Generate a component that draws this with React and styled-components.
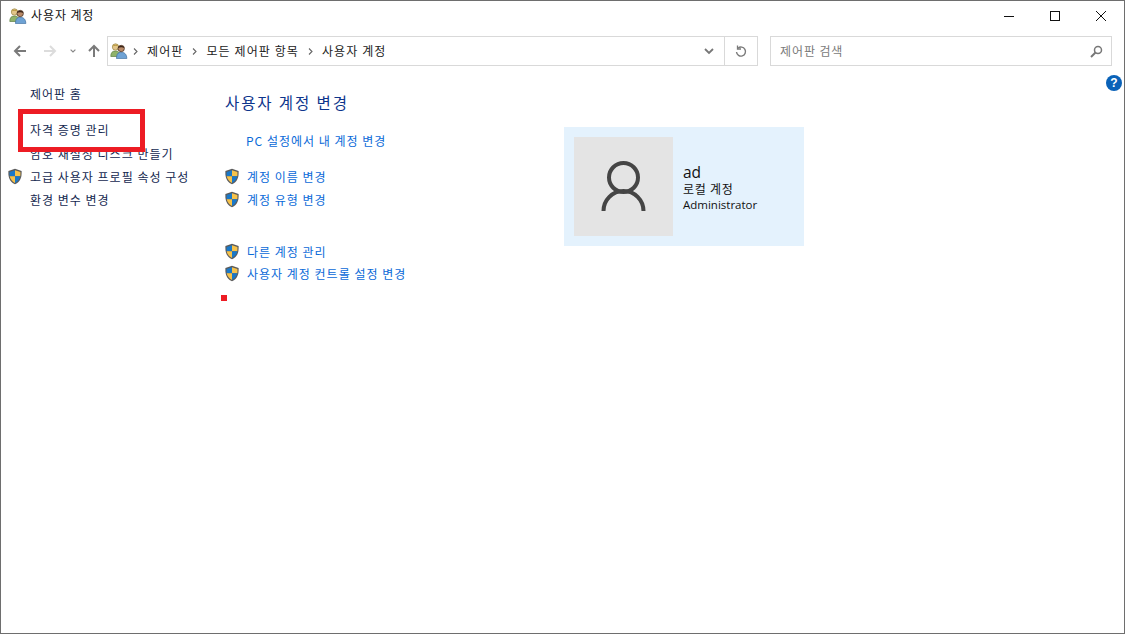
import React from "react";
import styled, { createGlobalStyle } from "styled-components";

const Global = createGlobalStyle`
  html, body { margin: 0; padding: 0; background: #fff; }
  body { font-family: "Noto Sans CJK KR", "Noto Sans", sans-serif; font-size: 12px; }
`;

const Win = styled.div`
  position: relative;
  box-sizing: border-box;
  width: 1125px;
  height: 634px;
  border: 1px solid #6e6e6e;
  overflow: hidden;
  background: #fff;
`;
const TitleBar = styled.div`
  display: flex;
  align-items: center;
  height: 29px;
  padding-left: 8px;
`;
const TitleText = styled.div`
  flex: 1;
  margin: -2px 0 0 4px;
  font-size: 12px;
  letter-spacing: 0.9px;
  color: #111;
  line-height: 29px;
`;
const WinBtn = styled.div`
  width: 46px;
  height: 29px;
  display: flex;
  align-items: center;
  justify-content: center;
`;
const NavBar = styled.div`
  display: flex;
  align-items: center;
  height: 30px;
  margin-top: 6px;
  padding-left: 4px;
`;
const NavBtn = styled.div`
  width: ${(p) => p.$w}px;
  height: 30px;
  display: flex;
  align-items: center;
  justify-content: center;
`;
const AddressBox = styled.div`
  box-sizing: border-box;
  display: flex;
  align-items: center;
  width: 651px;
  height: 30px;
  border: 1px solid #d9d9d9;
  padding-left: 2px;
`;
const Crumbs = styled.div`
  flex: 1;
  display: flex;
  align-items: center;
  min-width: 0;
`;
const Crumb = styled.span`
  font-size: 12px;
  letter-spacing: 1.1px;
  margin-top: -2px;
  color: #222;
  white-space: nowrap;
`;
const Sep = styled.svg`
  width: 5px;
  height: 7px;
  margin: 1px 9px 0 ${(p) => p.$ml ?? 9}px;
  flex: none;
`;
const AddrEnd = styled.div`
  box-sizing: border-box;
  width: ${(p) => p.$w}px;
  height: 28px;
  display: flex;
  align-items: center;
  justify-content: center;
  border-left: ${(p) => (p.$line ? "1px solid #d9d9d9" : "none")};
`;
const SearchBox = styled.div`
  box-sizing: border-box;
  display: flex;
  align-items: center;
  justify-content: space-between;
  width: 342px;
  height: 30px;
  margin-left: 12px;
  border: 1px solid #d9d9d9;
  padding: 0 8px 0 9px;
  font-size: 12px;
  letter-spacing: 0.9px;
  color: #7a7a7a;
`;
const SearchLabel = styled.span`
  margin-top: -2px;
`;
const HelpIcon = styled.div`
  position: absolute;
  right: 2px;
  top: 74px;
  width: 16px;
  height: 16px;
  border-radius: 50%;
  background: #0a62b8;
  color: #fff;
  font: bold 12px/16px "Liberation Sans", sans-serif;
  text-align: center;
`;
const Body = styled.div`
  display: flex;
`;
const Side = styled.div`
  width: 223px;
  flex: none;
  padding: 16px 0 0 6px;
  box-sizing: border-box;
`;
const SideRow = styled.div`
  display: flex;
  align-items: center;
  height: 23.3px;
  padding-left: ${(p) => (p.$icon ? 0 : 23)}px;
  gap: 7px;
  font-size: 12px;
  letter-spacing: 1px;
  color: #14284f;
  white-space: nowrap;
`;
const CredRow = styled(SideRow)`
  position: relative;
  z-index: 1;
  margin-top: 13px;
  &::before {
    content: "";
    position: absolute;
    z-index: -1;
    left: 11px;
    top: -9px;
    box-sizing: border-box;
    width: 127px;
    height: 43px;
    border: 5px solid #ed1c24;
    background: #fff;
  }
`;
const Main = styled.div`
  flex: 1;
  display: flex;
  padding-top: 24px;
`;
const MainCol = styled.div`
  width: 340px;
  flex: none;
`;
const Heading = styled.div`
  font-size: 15.5px;
  letter-spacing: 1.9px;
  line-height: 24px;
  margin-left: 1px;
  color: #0d358c;
`;
const LinkRow = styled.div`
  display: flex;
  align-items: center;
  height: ${(p) => p.$h ?? 23}px;
  margin-top: ${(p) => p.$mt ?? 0}px;
  padding-left: ${(p) => (p.$icon ? 0 : 22)}px;
  gap: 7px;
  font-size: 12px;
  letter-spacing: 1px;
  color: #0a6ad8;
  white-space: nowrap;
`;
const Dot = styled.div`
  width: 6px;
  height: 6px;
  margin-top: 11px;
  margin-left: -3px;
  background: #ed1c24;
`;
const Card = styled.div`
  display: flex;
  align-items: center;
  box-sizing: border-box;
  width: 240px;
  height: 119px;
  margin-top: 37px;
  padding-left: 10px;
  background: #e4f2fd;
`;
const Avatar = styled.div`
  width: 99px;
  height: 99px;
  background: #e4e4e4;
  flex: none;
`;
const CardText = styled.div`
  margin-left: 10px;
  margin-top: 2px;
  color: #111;
`;
const CardName = styled.div`
  font: 15.5px/17px "Open Sans", sans-serif;
`;
const CardLine = styled.div`
  font-size: 12px;
  letter-spacing: 0.75px;
  line-height: 16px;
`;
const CardRole = styled.div`
  font: 11.5px/15px "Open Sans", sans-serif;
`;

const Users = () => (
  <svg width="18" height="16" viewBox="0 0 18 16" style={{ flex: "none" }}>
    <path d="M.8 13.500c0-3.500 1.200-5.500 4.700-5.500S10 10 10 13.500z" fill="#8fb26a" stroke="#5f7f45" strokeWidth=".7" />
    <circle cx="5.500" cy="4" r="3.200" fill="#e2c58a" stroke="#9a8748" strokeWidth=".7" />
    <path d="M2.500 3.500C3 1 8 1 8.500 3.500 7 2.600 4 2.600 2.500 3.500z" fill="#b99a3f" />
    <path d="M6.500 15.600c0-4.500 1.500-6.300 4.700-6.300s5.600 1.800 5.600 6.300z" fill="#6ea2d4" stroke="#3f6f9f" strokeWidth=".7" />
    <circle cx="11.200" cy="5.500" r="3.200" fill="#b98a68" stroke="#3f2a1c" strokeWidth=".7" />
    <path d="M8 5c.3-3 6-3 6.400 0-1.800-1-4.600-1-6.400 0z" fill="#3a2518" />
  </svg>
);
const Shield = () => (
  <svg width="16" height="17" viewBox="0 0 16 17" style={{ flex: "none" }}>
    <path d="M8 .8 14.600 3c.3 6-.8 10.500-6.600 13.300C2.200 13.500 1.100 9 1.400 3z" fill="#5c5c5c" />
    <path d="M8 2.200V8.200H2.700C2.500 7 2.500 5.500 2.600 3.900z" fill="#1a78c8" />
    <path d="M8 2.200 13.400 3.900c.1 1.600.1 3.100-.1 4.300H8z" fill="#f6c24a" />
    <path d="M2.700 8.200H8v6.700C5 13.300 3.300 11.200 2.700 8.200z" fill="#f6c24a" />
    <path d="M13.300 8.200H8v6.700c3-1.600 4.700-3.700 5.300-6.700z" fill="#1a78c8" />
  </svg>
);
const Arrow = ({ color, dir = "left" }) => (
  <svg width="14" height="14" viewBox="0 0 14 14" style={{ transform: dir === "right" ? "scaleX(-1)" : dir === "up" ? "rotate(90deg)" : "none" }}>
    <path d="M13 7H2M7 2 2 7l5 5" fill="none" stroke={color} strokeWidth="2" />
  </svg>
);
const Chevron = ({ w = 7, color = "#7a7a7a", sw = 1.5 }) => (
  <svg width={w} height={w * 0.7} viewBox="0 0 10 7">
    <path d="M1 1l4 4 4-4" fill="none" stroke={color} strokeWidth={sw * 1.3} />
  </svg>
);
const SepIcon = ({ ml }) => (
  <Sep viewBox="0 0 5 7" $ml={ml}>
    <path d="M1 .5 4 3.500 1 6.500" fill="none" stroke="#666" strokeWidth="1.100" />
  </Sep>
);

export default function App() {
  return (
    <>
      <Global />
      <Win>
        <TitleBar>
          <Users />
          <TitleText>사용자 계정</TitleText>
          <WinBtn>
            <svg width="10" height="10" viewBox="0 0 10 10"><path d="M0 5.500h10" stroke="#111" strokeWidth="1" /></svg>
          </WinBtn>
          <WinBtn>
            <svg width="10" height="10" viewBox="0 0 10 10"><rect x=".5" y=".5" width="9" height="9" fill="none" stroke="#111" /></svg>
          </WinBtn>
          <WinBtn>
            <svg width="10" height="10" viewBox="0 0 10 10"><path d="M0 0l10 10M10 0 0 10" stroke="#111" strokeWidth="1" /></svg>
          </WinBtn>
        </TitleBar>
        <NavBar>
          <NavBtn $w={30}><Arrow color="#7a7a7a" /></NavBtn>
          <NavBtn $w={30}><Arrow color="#dcdcdc" dir="right" /></NavBtn>
          <NavBtn $w={16}><Chevron w={6} color="#888" /></NavBtn>
          <NavBtn $w={26}><Arrow color="#7a7a7a" dir="up" /></NavBtn>
          <AddressBox>
            <Crumbs>
              <Users />
              <SepIcon ml={5} />
              <Crumb>제어판</Crumb>
              <SepIcon />
              <Crumb>모든 제어판 항목</Crumb>
              <SepIcon />
              <Crumb>사용자 계정</Crumb>
            </Crumbs>
            <AddrEnd $w={30}><Chevron w={10} color="#777" sw={1.4} /></AddrEnd>
            <AddrEnd $w={33} $line>
              <svg width="12" height="13" viewBox="0 0 12 13">
                <path d="M3 3.200A4.500 4.500 0 1 1 1.500 7" fill="none" stroke="#7a7a7a" strokeWidth="1.400" />
                <path d="M2.500 .5v3.500h3.500" fill="none" stroke="#7a7a7a" strokeWidth="1.300" />
              </svg>
            </AddrEnd>
          </AddressBox>
          <SearchBox>
            <SearchLabel>제어판 검색</SearchLabel>
            <svg width="13" height="13" viewBox="0 0 13 13">
              <circle cx="8" cy="5" r="3.500" fill="none" stroke="#777" strokeWidth="1.500" />
              <path d="M5.500 7.500 1 12" stroke="#777" strokeWidth="2" />
            </svg>
          </SearchBox>
        </NavBar>
        <HelpIcon>?</HelpIcon>
        <Body>
          <Side>
            <SideRow>제어판 홈</SideRow>
            <CredRow>자격 증명 관리</CredRow>
            <SideRow>암호 재설정 디스크 만들기</SideRow>
            <SideRow $icon><Shield />고급 사용자 프로필 속성 구성</SideRow>
            <SideRow>환경 변수 변경</SideRow>
          </Side>
          <Main>
            <MainCol>
              <Heading>사용자 계정 변경</Heading>
              <LinkRow $mt={15}>PC 설정에서 내 계정 변경</LinkRow>
              <LinkRow $mt={13} $icon><Shield />계정 이름 변경</LinkRow>
              <LinkRow $icon><Shield />계정 유형 변경</LinkRow>
              <LinkRow $mt={29} $icon><Shield />다른 계정 관리</LinkRow>
              <LinkRow $h={22} $mt={-1} $icon><Shield />사용자 계정 컨트롤 설정 변경</LinkRow>
              <Dot />
            </MainCol>
            <Card>
              <Avatar>
                <svg width="99" height="99" viewBox="0 0 99 99">
                  <circle cx="49.500" cy="40.500" r="14.500" fill="none" stroke="#454545" strokeWidth="4" />
                  <path d="M29.500 74a20 20 0 0 1 40 0" fill="none" stroke="#454545" strokeWidth="4" />
                </svg>
              </Avatar>
              <CardText>
                <CardName>ad</CardName>
                <CardLine>로컬 계정</CardLine>
                <CardRole>Administrator</CardRole>
              </CardText>
            </Card>
          </Main>
        </Body>
      </Win>
    </>
  );
}
